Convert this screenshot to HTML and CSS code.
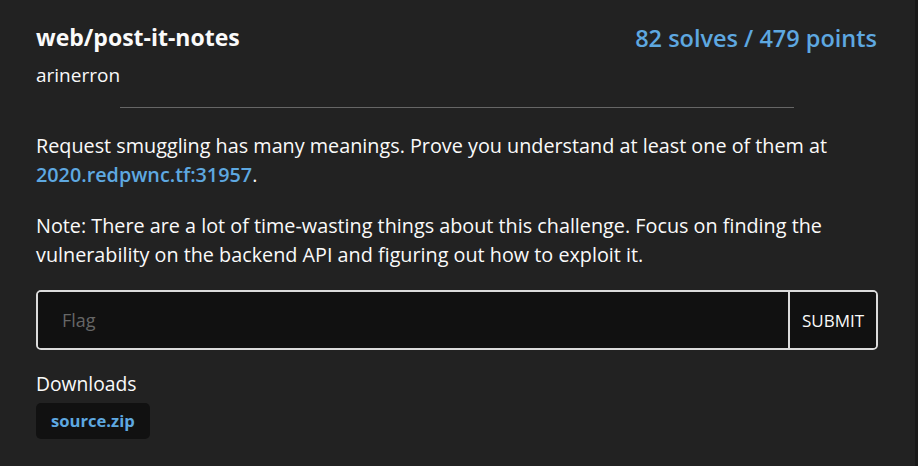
FILE: index.html
```html
<!DOCTYPE html>
<html>
<head>
<meta charset="utf-8">
<link rel="stylesheet" href="styles.css">
</head>
<body>
<div class="card">
  <div class="header">
    <div class="title-block">
      <h1 class="title">web/post-it-notes</h1>
      <div class="author">arinerron</div>
    </div>
    <div class="stats">82 solves / 479 points</div>
  </div>
  <hr class="divider">
  <div class="desc">
    <p>Request smuggling has many meanings. Prove you understand at least one of them at <a class="link" href="#">2020.redpwnc.tf:31957</a>.</p>
    <p>Note: There are a lot of time-wasting things about this challenge. Focus on finding the vulnerability on the backend API and figuring out how to exploit it.</p>
  </div>
  <form class="flag-form">
    <input class="flag-input" type="text" placeholder="Flag">
    <button class="submit" type="button">SUBMIT</button>
  </form>
  <div class="downloads">
    <div class="downloads-label">Downloads</div>
    <a class="download" href="#">source.zip</a>
  </div>
</div>
</body>
</html>
```
FILE: styles.css
```css
html, body {
  margin: 0;
  padding: 0;
  background: #191919;
  height: 100%;
}
body {
  font-family: "Open Sans", "Noto Sans", sans-serif;
  color: #fafafa;
}
.card {
  width: 915px;
  height: 466px;
  box-sizing: border-box;
  background: #222222;
  padding: 22px 37px 0 36px;
}
.header {
  display: flex;
  justify-content: space-between;
  align-items: flex-start;
}
.title {
  margin: 0;
  font-size: 23px;
  font-weight: 700;
  line-height: 30px;
}
.author {
  font-size: 19px;
  line-height: 26px;
  margin-top: 10px;
}
.stats {
  font-size: 23.5px;
  font-weight: 600;
  line-height: 30px;
  padding-top: 1px;
  margin-right: 1px;
  color: #5ea8e0;
}
.divider {
  width: 80%;
  border: 0;
  border-top: 1px solid #666;
  margin: 19px auto 0 auto;
}
.desc {
  font-size: 19.8px;
  line-height: 28.5px;
  margin-top: 24px;
}
.desc p {
  margin: 0 0 23px 0;
}
.desc p:last-child {
  margin-bottom: 21px;
}
.link {
  color: #5ea8e0;
  font-weight: 600;
  text-decoration: none;
}
.flag-form {
  display: flex;
  height: 60px;
  box-sizing: border-box;
  border: 2px solid #dcdcdc;
  border-radius: 5px;
  background: #111;
  overflow: hidden;
}
.flag-input {
  flex: 1;
  min-width: 0;
  background: #111;
  border: 0;
  outline: none;
  color: #fff;
  font-family: inherit;
  font-size: 18px;
  padding: 0 0 0 24px;
}
.flag-input::placeholder {
  color: #666;
}
.submit {
  width: 88px;
  background: #111;
  color: #fafafa;
  border: 0;
  border-left: 2px solid #dcdcdc;
  font-family: inherit;
  font-size: 17px;
  padding: 0;
}
.downloads {
  margin-top: 21px;
}
.downloads-label {
  font-size: 19.3px;
  line-height: 26px;
}
.download {
  display: inline-block;
  margin-top: 6px;
  background: #111;
  color: #5ea8e0;
  font-weight: 700;
  font-size: 16.6px;
  line-height: 36px;
  padding: 0 15px;
  border-radius: 5px;
  text-decoration: none;
}
```
